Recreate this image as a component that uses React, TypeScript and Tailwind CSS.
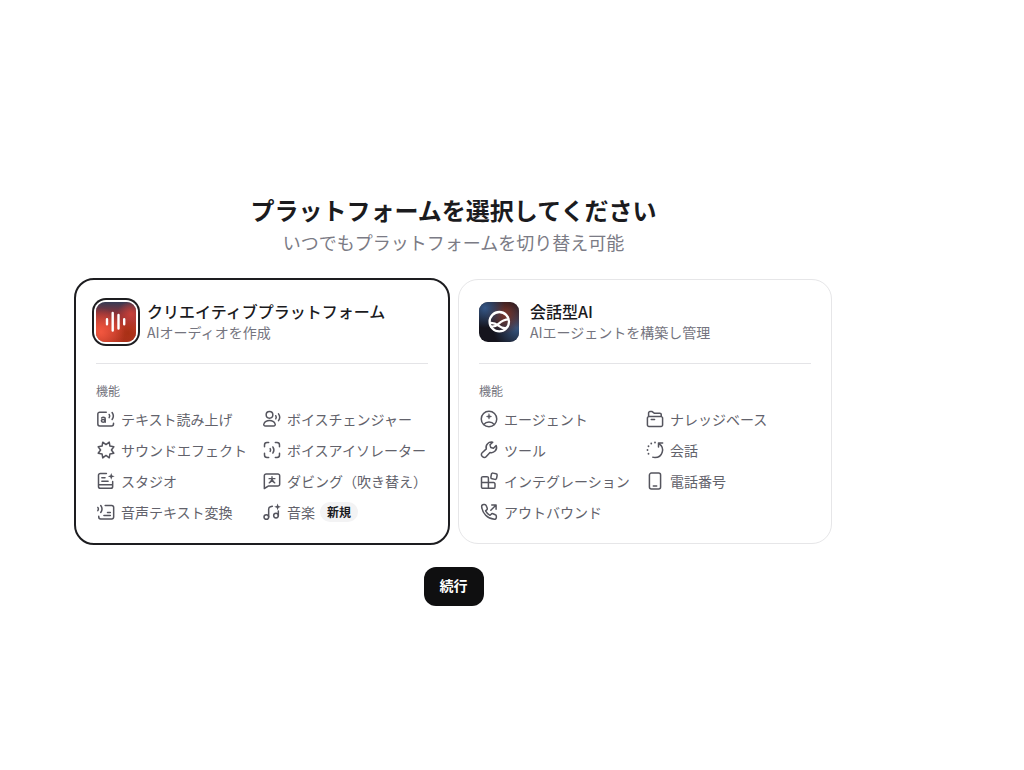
import { useState } from "react";
import type { ReactNode } from "react";

function Icon({ children }: { children: ReactNode }) {
  return (
    <svg
      viewBox="0 0 24 24"
      className="size-5 shrink-0 text-[#55555e]"
      fill="none"
      stroke="currentColor"
      strokeWidth="1.8"
      strokeLinecap="round"
      strokeLinejoin="round"
      aria-hidden="true"
    >
      {children}
    </svg>
  );
}

const SpeechIcon = () => (
  <Icon>
    <path d="M12.300 3.800H4.400A2.200 2.200 0 0 0 2.200 6v12.100a2.200 2.200 0 0 0 2.200 2.200h14.400a2.200 2.200 0 0 0 2.200-2.200V17" />
    <path d="M6.700 10.700c.6-.6 1.200-.9 2-.9 1.500 0 2.300.7 2.300 2v4.200" />
    <ellipse cx="8.600" cy="14.200" rx="2.200" ry="1.600" />
    <path d="M15.800 6.500c.8 1.200.8 2.700 0 3.900M19.300 4.200c1.900 2.600 1.900 5.800 0 8.400" />
  </Icon>
);

const SparkIcon = () => (
  <Icon>
    <path d="M12 5.500 15.900 2.600l.8 4.700 4.700.8L18.500 12l2.900 3.900-4.700.8-.8 4.700L12 18.500l-3.900 2.900-.8-4.700-4.700-.8L5.500 12 2.600 8.100l4.700-.8.8-4.700z" />
  </Icon>
);

const StudioIcon = () => (
  <Icon>
    <path d="M12.500 3H5.200A2.200 2.200 0 0 0 3 5.200v13.400a2.200 2.200 0 0 0 2.200 2.200h12.600a2.200 2.200 0 0 0 2.200-2.200v-6M3.300 16.500h16.500M7 8.200h3.800M7 12.300h7.500" />
    <path d="M18.300 2.300l1.100 3 3 1.100-3 1.100-1.100 3-1.100-3-3-1.100 3-1.100z" fill="currentColor" stroke="none" />
  </Icon>
);

const TranscribeIcon = () => (
  <Icon>
    <path d="M11 4.300h8a2.200 2.200 0 0 1 2.200 2.200v11.600a2.200 2.200 0 0 1-2.200 2.200H5.500a2.200 2.200 0 0 1-2.200-2.200V17M13.800 12.500h3.400M9.500 16.300h7.700" />
    <path d="M2.200 6.500c.8 1.200.8 2.700 0 3.900M5.700 4.200c1.900 2.600 1.900 5.800 0 8.400" />
  </Icon>
);

const VoiceChangerIcon = () => (
  <Icon>
    <circle cx="9" cy="7" r="4" />
    <path d="M9 13.800c3.300 0 5.700 1.600 6.700 3.900.7 1.500-.4 2.800-1.900 2.800H4.200c-1.500 0-2.600-1.300-1.900-2.800C3.300 15.400 5.700 13.800 9 13.800z" />
    <path d="M16.500 8c.8 1.200.8 2.600 0 3.800M19.800 5.800c1.800 2.500 1.800 5.700 0 8.200" />
  </Icon>
);

const IsolatorIcon = () => (
  <Icon>
    <path d="M8 3H6a3 3 0 0 0-3 3v2M16 3h2a3 3 0 0 1 3 3v2M3 16v2a3 3 0 0 0 3 3h2M21 16v2a3 3 0 0 1-3 3h-2" />
    <path d="M9.800 10.300c.7 1.100.7 2.300 0 3.400M13 8.300c1.600 2.300 1.600 5.100 0 7.400" />
  </Icon>
);

const DubbingIcon = () => (
  <Icon>
    <path d="M5 3.500h14A2.200 2.200 0 0 1 21.200 5.700v10.200a2.200 2.200 0 0 1-2.200 2.200H7.500L2.800 21V5.700A2.200 2.200 0 0 1 5 3.500z" />
    <path d="M12 6.800v2M8.500 9.200h7M12 9.400c-.3 2.300-1.500 4-3.300 4.900M12 9.400c.3 2.300 1.500 4 3.300 4.900M10 12.300h4" strokeWidth="1.600" />
  </Icon>
);

const MusicIcon = () => (
  <Icon>
    <circle cx="5.200" cy="18" r="2.800" />
    <circle cx="16.800" cy="16.300" r="2.800" />
    <path d="M8 18V8.600c0-1.500.8-2.500 2.200-2.900l2.200-.6M19.600 16.300v-5.500" />
    <path d="M18.700 1.800l1.100 2.900 2.900 1.100-2.900 1.100-1.100 2.900-1.100-2.900-2.900-1.100 2.900-1.100z" fill="currentColor" stroke="none" />
  </Icon>
);

const AgentIcon = () => (
  <Icon>
    <circle cx="12" cy="12" r="9.300" />
    <path d="M5.800 18.500c3-3.900 9.400-3.900 12.400 0" />
    <path d="M12 5.800l.9 2.300 2.300.9-2.300.9-.9 2.300-.9-2.300-2.300-.9 2.300-.9z" fill="currentColor" strokeWidth=".5" />
  </Icon>
);

const ToolIcon = () => (
  <Icon>
    <path d="M20.600 6.600l-3.300 3.300-3.200-.9-.9-3.200 3.300-3.200c-2.200-.5-4.600.1-6.200 1.800-1.700 1.700-2.200 4.100-1.500 6.300l-5 4.600a2.800 2.800 0 0 0-.1 4.100l.7.700a2.800 2.800 0 0 0 4.100-.1l4.700-5.100c2.200.6 4.500 0 6.100-1.600 1.800-1.800 2.200-4.400 1.300-6.700z" />
  </Icon>
);

const IntegrationIcon = () => (
  <Icon>
    <path d="M11.300 20.800H4.700A1.700 1.700 0 0 1 3 19.100V8.500a1.700 1.700 0 0 1 1.700-1.700h4.900a1.700 1.700 0 0 1 1.700 1.700v12.300zM3 13.800h14.500a1.700 1.700 0 0 1 1.700 1.700v3.600a1.700 1.700 0 0 1-1.700 1.700h-6.200" />
    <rect x="14.500" y="2.800" width="7" height="7" rx="1.700" transform="rotate(10 18 6.300)" />
  </Icon>
);

const OutboundIcon = () => (
  <Icon>
    <path d="M8.700 4.400 9.800 7.300c.3.800.1 1.600-.5 2.100l-1.400 1.300c1.200 2.300 3 4.100 5.300 5.300l1.400-1.400c.5-.6 1.400-.8 2.100-.5l2.900 1.200c.8.300 1.200 1 1.200 1.800v1.400a2.300 2.300 0 0 1-2.500 2.300C10.200 19.800 4 13.700 3.200 5.500A2.300 2.300 0 0 1 5.500 3h1.300c.8 0 1.600.600 1.900 1.400z" />
    <path d="M14.200 9.800l6-6M15.300 3.500h5.200v5.200" />
  </Icon>
);

const KnowledgeIcon = () => (
  <Icon>
    <path d="M4.700 9h14.600a1.800 1.800 0 0 1 1.800 1.800v8.400a1.800 1.800 0 0 1-1.800 1.800H4.700a1.800 1.800 0 0 1-1.800-1.800v-8.400A1.800 1.800 0 0 1 4.700 9zM4.300 9V4.800A1.700 1.700 0 0 1 6 3.100h2.600L11 5h6.800a1.700 1.700 0 0 1 1.700 1.700V9M7.500 12.700h4" />
  </Icon>
);

const ConversationIcon = () => (
  <Icon>
    <path d="M17 4.500A9 9 0 0 1 12 21c-1 0-1.900-.1-2.700-.4M21.200 3.500h-5v5" />
    <path d="M12 3v.1M7.500 4.200v.1M4.200 7.500v.1M3 12v.1M4.200 16.500v.1" strokeWidth="2.200" />
  </Icon>
);

const PhoneIcon = () => (
  <Icon>
    <rect x="5.300" y="2.500" width="13.400" height="19" rx="2.400" />
    <path d="M10 18h4" />
  </Icon>
);

const CreativeTile = () => (
  <svg viewBox="0 0 40 40" className="size-10" aria-hidden="true">
    <defs>
      <linearGradient id="creative-base" x1="0" y1="0" x2="0" y2="1">
        <stop offset="0" stopColor="#363b55" />
        <stop offset=".3" stopColor="#8d3136" />
        <stop offset=".65" stopColor="#c13a2b" />
        <stop offset="1" stopColor="#a92f1c" />
      </linearGradient>
      <radialGradient id="creative-glow" cx=".12" cy=".75" r=".6">
        <stop offset="0" stopColor="#f2573f" />
        <stop offset="1" stopColor="#f2573f" stopOpacity="0" />
      </radialGradient>
      <radialGradient id="creative-shade" cx=".8" cy=".78" r=".35">
        <stop offset="0" stopColor="#a83014" />
        <stop offset="1" stopColor="#a83014" stopOpacity="0" />
      </radialGradient>
      <radialGradient id="creative-spot" cx=".88" cy=".3" r=".35">
        <stop offset="0" stopColor="#c84039" />
        <stop offset="1" stopColor="#c84039" stopOpacity="0" />
      </radialGradient>
    </defs>
    <rect width="40" height="40" rx="9" fill="url(#creative-base)" />
    <rect width="40" height="40" rx="9" fill="url(#creative-spot)" />
    <rect width="40" height="40" rx="9" fill="url(#creative-shade)" />
    <rect width="40" height="40" rx="9" fill="url(#creative-glow)" />
    <path d="M11 17.300v5M16.700 11v17.500M22.500 13v13.500M28.200 17.300v5" stroke="#fff" strokeWidth="2.400" strokeLinecap="round" />
  </svg>
);

const AgentTile = () => (
  <svg viewBox="0 0 40 40" className="size-10" aria-hidden="true">
    <defs>
      <radialGradient id="agent-blue" cx=".15" cy=".15" r=".5">
        <stop offset="0" stopColor="#355787" />
        <stop offset="1" stopColor="#355787" stopOpacity="0" />
      </radialGradient>
      <radialGradient id="agent-red" cx=".65" cy=".3" r=".5">
        <stop offset="0" stopColor="#7c3529" />
        <stop offset="1" stopColor="#7c3529" stopOpacity="0" />
      </radialGradient>
      <radialGradient id="agent-steel" cx=".95" cy=".65" r=".6">
        <stop offset="0" stopColor="#35557f" />
        <stop offset="1" stopColor="#35557f" stopOpacity="0" />
      </radialGradient>
    </defs>
    <rect width="40" height="40" rx="9" fill="#15141d" />
    <rect width="40" height="40" rx="9" fill="url(#agent-steel)" />
    <rect width="40" height="40" rx="9" fill="url(#agent-red)" />
    <rect width="40" height="40" rx="9" fill="url(#agent-blue)" />
    <g fill="none" stroke="#fff" strokeWidth="2.300">
      <circle cx="20.300" cy="19.700" r="9.700" />
      <path d="M10.800 21c3.700-.4 6.200.8 8.700 2.700s4.500 2.900 8 2.300M29.800 17.300c-5 0-7.800 2.200-10.300 4.500s-4.300 3.200-7.600 2.800" />
    </g>
  </svg>
);

type Feature = { label: string; icon: () => ReactNode; badge?: string };
type Platform = {
  id: string;
  name: string;
  description: string;
  tile: () => ReactNode;
  columns: Feature[][];
};

const platforms: Platform[] = [
  {
    id: "creative",
    name: "クリエイティブプラットフォーム",
    description: "AIオーディオを作成",
    tile: CreativeTile,
    columns: [
      [
        { label: "テキスト読み上げ", icon: SpeechIcon },
        { label: "サウンドエフェクト", icon: SparkIcon },
        { label: "スタジオ", icon: StudioIcon },
        { label: "音声テキスト変換", icon: TranscribeIcon },
      ],
      [
        { label: "ボイスチェンジャー", icon: VoiceChangerIcon },
        { label: "ボイスアイソレーター", icon: IsolatorIcon },
        { label: "ダビング（吹き替え）", icon: DubbingIcon },
        { label: "音楽", icon: MusicIcon, badge: "新規" },
      ],
    ],
  },
  {
    id: "agents",
    name: "会話型AI",
    description: "AIエージェントを構築し管理",
    tile: AgentTile,
    columns: [
      [
        { label: "エージェント", icon: AgentIcon },
        { label: "ツール", icon: ToolIcon },
        { label: "インテグレーション", icon: IntegrationIcon },
        { label: "アウトバウンド", icon: OutboundIcon },
      ],
      [
        { label: "ナレッジベース", icon: KnowledgeIcon },
        { label: "会話", icon: ConversationIcon },
        { label: "電話番号", icon: PhoneIcon },
      ],
    ],
  },
];

function PlatformCard({
  platform,
  selected,
  onSelect,
}: {
  platform: Platform;
  selected: boolean;
  onSelect: () => void;
}) {
  const Tile = platform.tile;
  return (
    <label
      className={
        selected
          ? "relative -m-px block cursor-pointer rounded-[20px] border-2 border-[#1d1d20] px-5 pt-5 pb-[21px]"
          : "relative block cursor-pointer rounded-[20px] border border-[#e6e6e8] px-5 pt-5 pb-[21px]"
      }
    >
      <input
        type="radio"
        name="platform"
        value={platform.id}
        checked={selected}
        onChange={onSelect}
        className="sr-only"
      />
      <span className="flex items-end gap-[11px]">
        <span
          className={
            selected
              ? "rounded-[10px] ring-2 ring-[#1d1d20] ring-offset-2 ring-offset-white"
              : "rounded-[10px]"
          }
        >
          <Tile />
        </span>
        <span className="flex flex-col">
          <span className="text-base leading-[22px] font-medium text-[#1b1b1e]">{platform.name}</span>
          <span className="text-sm leading-5 text-[#74747e]">{platform.description}</span>
        </span>
      </span>
      <span className="mt-[21px] block border-t border-[#e4e4e7]" />
      <span className="mt-[19px] block text-xs leading-4 text-[#74747e]">機能</span>
      <span className="mt-2.5 grid grid-cols-2">
        {platform.columns.map((column, index) => (
          <ul key={index} className="flex flex-col gap-[11px]">
            {column.map(({ label, icon: FeatureIcon, badge }) => (
              <li key={label} className="flex h-5 items-center gap-[5px] text-sm leading-5 whitespace-nowrap text-[#62626b]">
                <FeatureIcon />
                <span>{label}</span>
                {badge && (
                  <span className="rounded-full bg-[#f3f3f4] px-[7px] text-xs leading-5 font-bold text-[#1b1b1e]">
                    {badge}
                  </span>
                )}
              </li>
            ))}
          </ul>
        ))}
      </span>
    </label>
  );
}

export default function App() {
  const [selected, setSelected] = useState("creative");
  return (
    <main className="flex min-h-screen flex-col items-center bg-white pt-[194px] pr-[117px] font-['Noto_Sans_CJK_JP',sans-serif]">
      <h1 className="text-2xl leading-8 font-bold text-[#1b1b1e]">プラットフォームを選択してください</h1>
      <p className="mt-1 text-lg leading-6 text-[#7b7b85]">いつでもプラットフォームを切り替え可能</p>
      <div className="mt-[25px] grid w-full max-w-[757px] grid-cols-2 gap-[9px]">
        {platforms.map((platform) => (
          <PlatformCard
            key={platform.id}
            platform={platform}
            selected={selected === platform.id}
            onSelect={() => setSelected(platform.id)}
          />
        ))}
      </div>
      <button
        type="button"
        className="mt-[23px] rounded-xl bg-[#0f0f10] px-4 pt-2 pb-[11px] text-sm leading-5 font-bold text-white"
      >
        続行
      </button>
    </main>
  );
}
